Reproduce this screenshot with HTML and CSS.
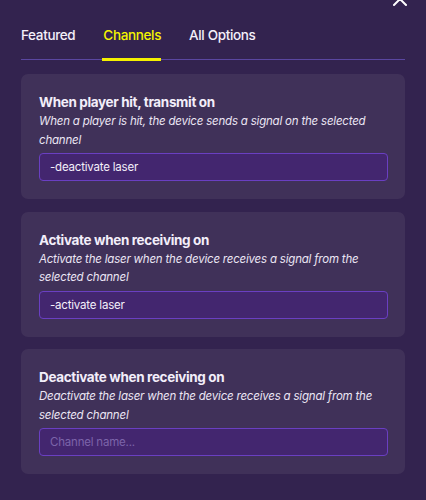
FILE: index.html
```html
<!DOCTYPE html>
<html>
<head>
<meta charset="utf-8">
<link rel="stylesheet" href="styles.css">
</head>
<body>
<div class="panel">
  <svg class="close" width="16" height="16" viewBox="0 0 16 16"><path d="M2 2 L14 14 M14 2 L2 14" stroke="#ffffff" stroke-width="2" stroke-linecap="round" fill="none"/></svg>
  <nav class="tabs">
    <div class="tab">Featured</div>
    <div class="tab active">Channels</div>
    <div class="tab">All Options</div>
  </nav>
  <div class="cards">
    <section class="card">
      <h2 class="title">When player hit, transmit on</h2>
      <p class="desc">When a player is hit, the device sends a signal on the selected channel</p>
      <div class="input">-deactivate laser</div>
    </section>
    <section class="card">
      <h2 class="title">Activate when receiving on</h2>
      <p class="desc">Activate the laser when the device receives a signal from the selected channel</p>
      <div class="input">-activate laser</div>
    </section>
    <section class="card">
      <h2 class="title">Deactivate when receiving on</h2>
      <p class="desc">Deactivate the laser when the device receives a signal from the selected channel</p>
      <div class="input placeholder">Channel name...</div>
    </section>
  </div>
</div>
</body>
</html>
```
FILE: styles.css
```css
* { box-sizing: border-box; }
html, body {
  margin: 0;
  padding: 0;
  background: #33234f;
  height: 100%;
  overflow: hidden;
}
body {
  font-family: Inter, "Noto Sans", "Liberation Sans", sans-serif;
  color: #f2ecfa;
}
.panel {
  position: relative;
  padding: 24px 21px 0 21px;
}
.close {
  position: absolute;
  top: -9px;
  left: 392px;
}
.tabs {
  display: flex;
  gap: 28px;
  border-bottom: 1px solid #5a46a0;
}
.tab {
  position: relative;
  font-size: 13.5px;
  font-weight: 500;
  letter-spacing: -0.35px;
  line-height: 20px;
  padding: 1px 0 14px;
  color: #f4f0fa;
}
.tab.active {
  color: #f5f500;
}
.tab.active::after {
  content: "";
  position: absolute;
  left: -1px;
  right: 0;
  bottom: -2px;
  height: 3px;
  background: #f5f000;
}
.cards {
  display: flex;
  flex-direction: column;
  gap: 12.5px;
  margin-top: 14px;
}
.card {
  background: #403159;
  border-radius: 7px;
  padding: 18px 17px 18px 18px;
}
.title {
  margin: 0;
  font-size: 13.5px;
  font-weight: 700;
  letter-spacing: -0.35px;
  line-height: 20px;
  color: #f3eefa;
}
.desc {
  margin: 0;
  font-size: 11.5px;
  font-style: italic;
  letter-spacing: -0.2px;
  line-height: 18.5px;
  color: #ebe5f4;
}
.input {
  margin-top: 4px;
  height: 28px;
  border: 1px solid #6a3fc2;
  border-radius: 4px;
  background: #43266f;
  padding: 0 10px;
  font-size: 11.5px;
  letter-spacing: -0.2px;
  line-height: 26px;
  color: #f4f0fa;
}
.input.placeholder {
  color: #7c64aa;
}
```
